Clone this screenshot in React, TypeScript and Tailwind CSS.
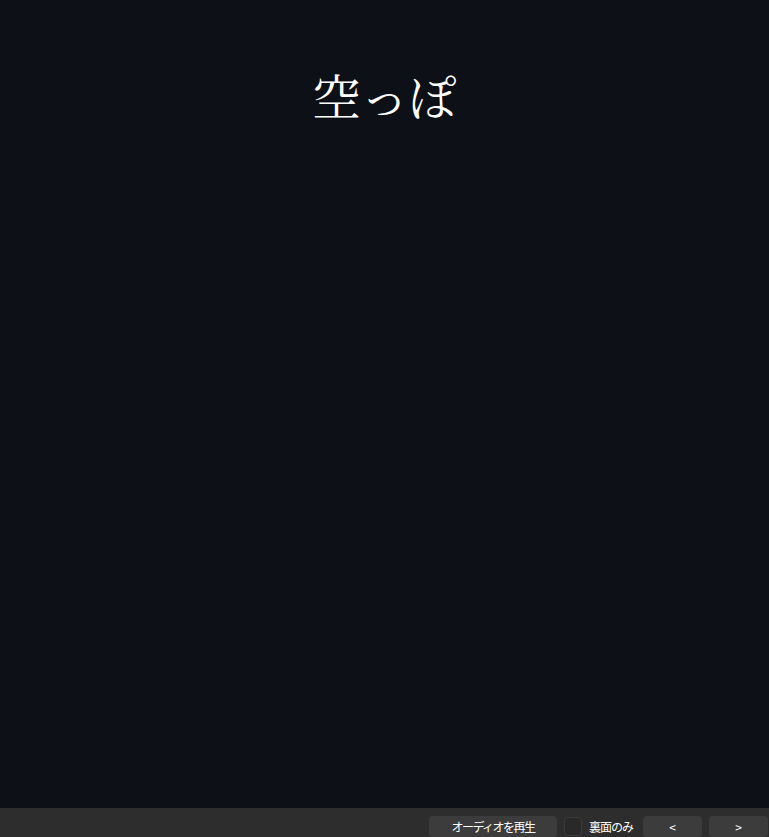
import React, { useState } from 'react';

export default function App() {
  const [backOnly, setBackOnly] = useState(false);

  return (
    <div className="h-[837px] w-full flex flex-col bg-[#0d1017] overflow-hidden">
      {/* Card area */}
      <div className="flex-1 flex justify-center pt-[67px]">
        <div
          className="text-white text-[48px] leading-[56px]"
          style={{ fontFamily: '"Noto Serif CJK JP", "Liberation Serif", "Noto Sans CJK JP", serif' }}
        >
          空っぽ
        </div>
      </div>

      {/* Bottom toolbar */}
      <div
        className="h-[29px] shrink-0 bg-[#2d2d2d] flex items-start justify-end pt-[8px] pr-[1px] gap-[7px] text-white text-[12px]"
        style={{ fontFamily: '"Noto Sans CJK JP", "Liberation Sans", sans-serif' }}
      >
        <button className="w-[128px] h-[21px] rounded-[4px] bg-[#3c3c3c] leading-[21px] tracking-[-1.5px]">
          オーディオを再生
        </button>
        <label className="flex items-center gap-[7px] h-[21px] cursor-pointer">
          <span
            onClick={() => setBackOnly(!backOnly)}
            className="w-[18px] h-[19px] rounded-[4px] bg-[#292929] border border-[#3a3a3a]"
          />
          <span className="mr-[3px] tracking-[-1px]">裏面のみ</span>
        </label>
        <button className="w-[59px] h-[21px] rounded-[4px] bg-[#3c3c3c] leading-[21px]">&lt;</button>
        <button className="w-[59px] h-[21px] rounded-[4px] bg-[#3c3c3c] leading-[21px]">&gt;</button>
      </div>
    </div>
  );
}
